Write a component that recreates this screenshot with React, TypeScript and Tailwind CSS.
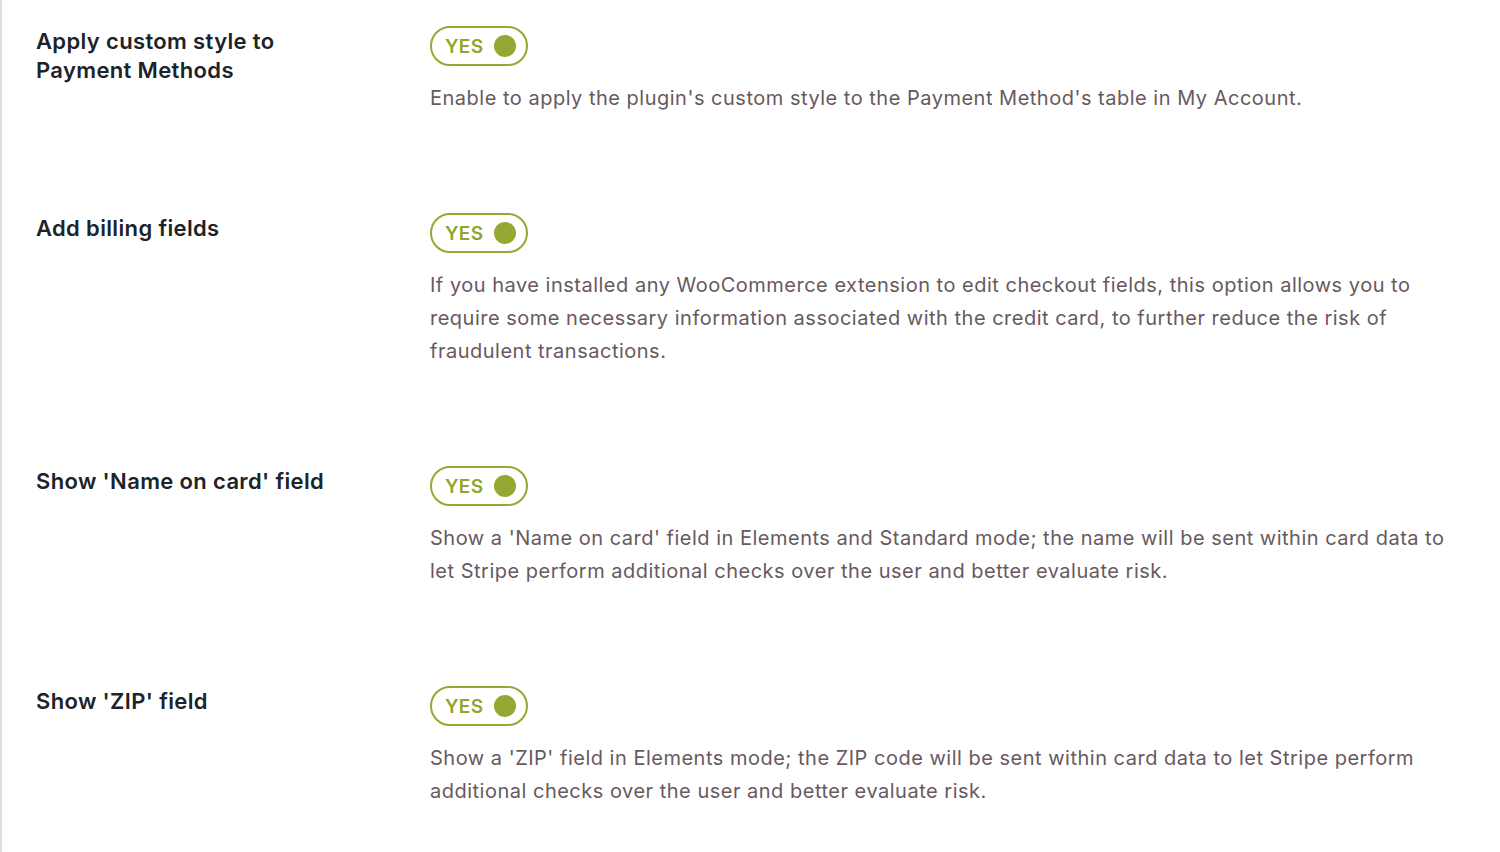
import React from "react";

const rows = [
  {
    label: "Apply custom style to Payment Methods",
    desc: "Enable to apply the plugin's custom style to the Payment Method's table in My Account.",
  },
  {
    label: "Add billing fields",
    desc: "If you have installed any WooCommerce extension to edit checkout fields, this option allows you to require some necessary information associated with the credit card, to further reduce the risk of fraudulent transactions.",
  },
  {
    label: "Show 'Name on card' field",
    desc: "Show a 'Name on card' field in Elements and Standard mode; the name will be sent within card data to let Stripe perform additional checks over the user and better evaluate risk.",
  },
  {
    label: "Show 'ZIP' field",
    desc: "Show a 'ZIP' field in Elements mode; the ZIP code will be sent within card data to let Stripe perform additional checks over the user and better evaluate risk.",
  },
];

function Toggle() {
  return (
    <div className="flex h-[40px] w-[98px] items-center justify-between rounded-full border-2 border-[#94a932] pl-[13px] pr-[10px]">
      <span className="text-[19px] font-semibold leading-none tracking-[0.3px] text-[#8fa52c]">YES</span>
      <span className="h-[22px] w-[22px] rounded-full bg-[#94a932]" />
    </div>
  );
}

export default function App() {
  return (
    <div
      className="min-h-[852px] w-[1500px] bg-white border-l-2 border-[#dcdcde]"
      style={{ fontFamily: "Inter, 'Noto Sans', sans-serif" }}
    >
      <div className="flex flex-col gap-[98px] pl-[34px] pt-[26px]">
        {rows.map((r) => (
          <div key={r.label} className="flex">
            <div className="w-[394px] shrink-0 pr-[70px] pt-[1px] text-[22px] font-semibold leading-[29px] tracking-[0.35px] text-[#1d2327]">
              {r.label}
            </div>
            <div className="flex flex-col gap-[16px]">
              <Toggle />
              <p className="max-w-[1030px] text-[20px] leading-[33px] tracking-[0.5px] text-[#685960]">{r.desc}</p>
            </div>
          </div>
        ))}
      </div>
    </div>
  );
}
